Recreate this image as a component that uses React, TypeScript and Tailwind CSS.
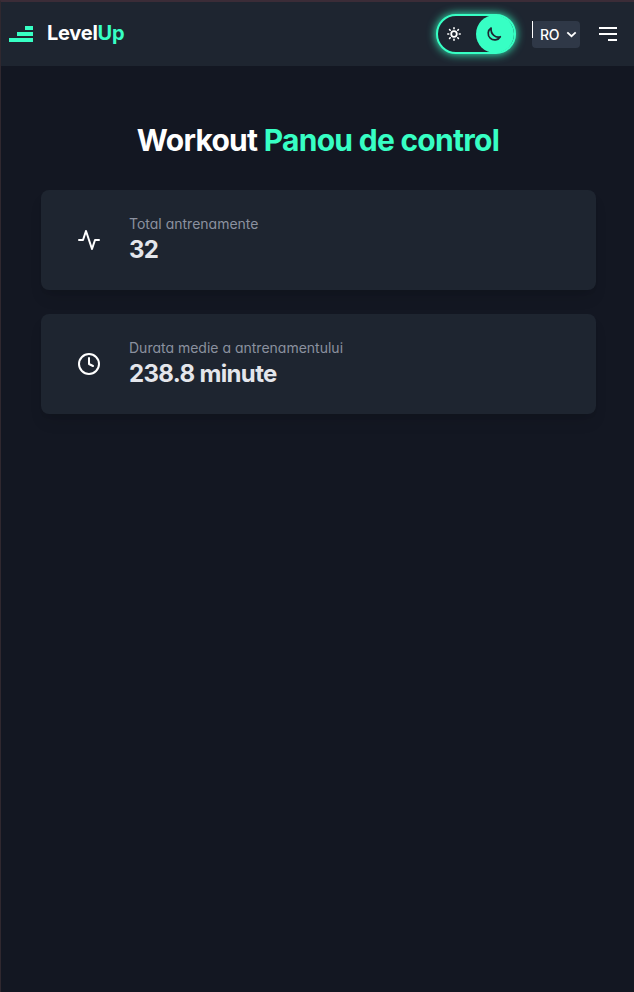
import React from "react";

function Logo() {
  return (
    <div className="flex w-6 flex-col items-end gap-0.5">
      <span className="h-1 w-2 bg-[#37ffc4]" />
      <span className="h-1 w-4 bg-[#37ffc4]" />
      <span className="h-1 w-6 bg-[#37ffc4]" />
    </div>
  );
}

function ThemeToggle() {
  return (
    <button className="flex h-10 w-20 items-center justify-between rounded-full border-2 border-[#37ffc4] bg-[#1e2530] text-white shadow-[0_0_10px_#37ffc4]">
      <svg className="ml-2 size-4" viewBox="0 0 16 16" fill="none" stroke="currentColor" strokeWidth="1.8">
        <circle cx="8" cy="8" r="2.8" />
        <path strokeWidth="1.6" strokeLinecap="round" d="M8 1.8v.9M8 13.3v.9M1.8 8h.9M13.3 8h.9M3.6 3.6l.6.6M11.8 11.8l.6.6M3.6 12.4l.6-.6M11.8 4.2l.6-.6" />
      </svg>
      <span className="-my-0.5 flex size-[38px] items-center justify-center rounded-full bg-[#37ffc4] text-[#1e2530]">
        <svg className="mr-0.5 size-4" viewBox="0 0 16 16" fill="none" stroke="currentColor" strokeWidth="1.7" strokeLinejoin="round">
          <path d="M5.1 2A6.5 6.5 0 1 0 14.3 10.7C9.9 12.1 4.4 8.6 5.1 2Z" />
        </svg>
      </span>
    </button>
  );
}

function LanguageSelect() {
  return (
    <button className="relative mt-px flex h-[27px] w-12 items-center justify-between rounded bg-[#2f3847] pr-[3px] pl-2 text-sm font-medium tracking-[-0.2px] text-white">
      <span className="absolute top-0 left-0 h-[17px] w-px bg-white" />
      RO
      <svg className="size-[11px]" viewBox="0 0 11 11" fill="none" stroke="currentColor" strokeWidth="1.8">
        <path d="M1.3 3.3 5.5 7.2 9.7 3.3" />
      </svg>
    </button>
  );
}

function StatCard({ label, value, children }: { label: string; value: string; children: React.ReactNode }) {
  return (
    <section className="flex h-[100px] items-center rounded-lg bg-[#1e2530] pl-9 shadow-lg">
      <svg className="mr-7 size-6" viewBox="0 0 24 24" fill="none" stroke="white" strokeWidth="2" strokeLinecap="round" strokeLinejoin="round">
        {children}
      </svg>
      <div>
        <p className="text-sm leading-5 text-[#8b919f] [font-feature-settings:'cv11']">{label}</p>
        <p className="text-2xl leading-8 font-bold tracking-[-0.65px] text-[#e4e6eb]">{value}</p>
      </div>
    </section>
  );
}

export default function App() {
  return (
    <div className="min-h-screen overflow-hidden border-t-2 border-l border-t-[#3b2c37] border-l-[#30282f] bg-[#131722] font-['Inter',sans-serif]">
      <header className="flex h-16 items-center bg-[#1e2530] pr-4 pl-2">
        <Logo />
        <span className="-mt-0.5 ml-3.5 text-xl leading-7 font-bold tracking-[-0.25px] text-white">
          Level<span className="text-[#37ffc4]">Up</span>
        </span>
        <div className="ml-auto flex items-center">
          <ThemeToggle />
          <div className="ml-4">
            <LanguageSelect />
          </div>
          <button className="ml-[19px] flex w-[19px] flex-col items-end gap-1 pr-px">
            <span className="h-0.5 w-[18px] bg-white" />
            <span className="h-0.5 w-[18px] bg-white" />
            <span className="h-0.5 w-[9px] bg-white" />
          </button>
        </div>
      </header>
      <main className="pt-14 pr-[38px] pl-10">
        <h1 className="-ml-px text-center text-3xl leading-9 font-bold tracking-[-0.72px] text-white">
          Workout <span className="text-[#37ffc4]">Panou de control</span>
        </h1>
        <div className="mt-8 flex flex-col gap-6">
          <StatCard label="Total antrenamente" value="32">
            <path d="M22 12h-4l-3 9L9 3l-3 9H2" />
          </StatCard>
          <StatCard label="Durata medie a antrenamentului" value="238.8 minute">
            <circle cx="12" cy="12" r="10" />
            <path d="M12 6v6l4 2" />
          </StatCard>
        </div>
      </main>
    </div>
  );
}
